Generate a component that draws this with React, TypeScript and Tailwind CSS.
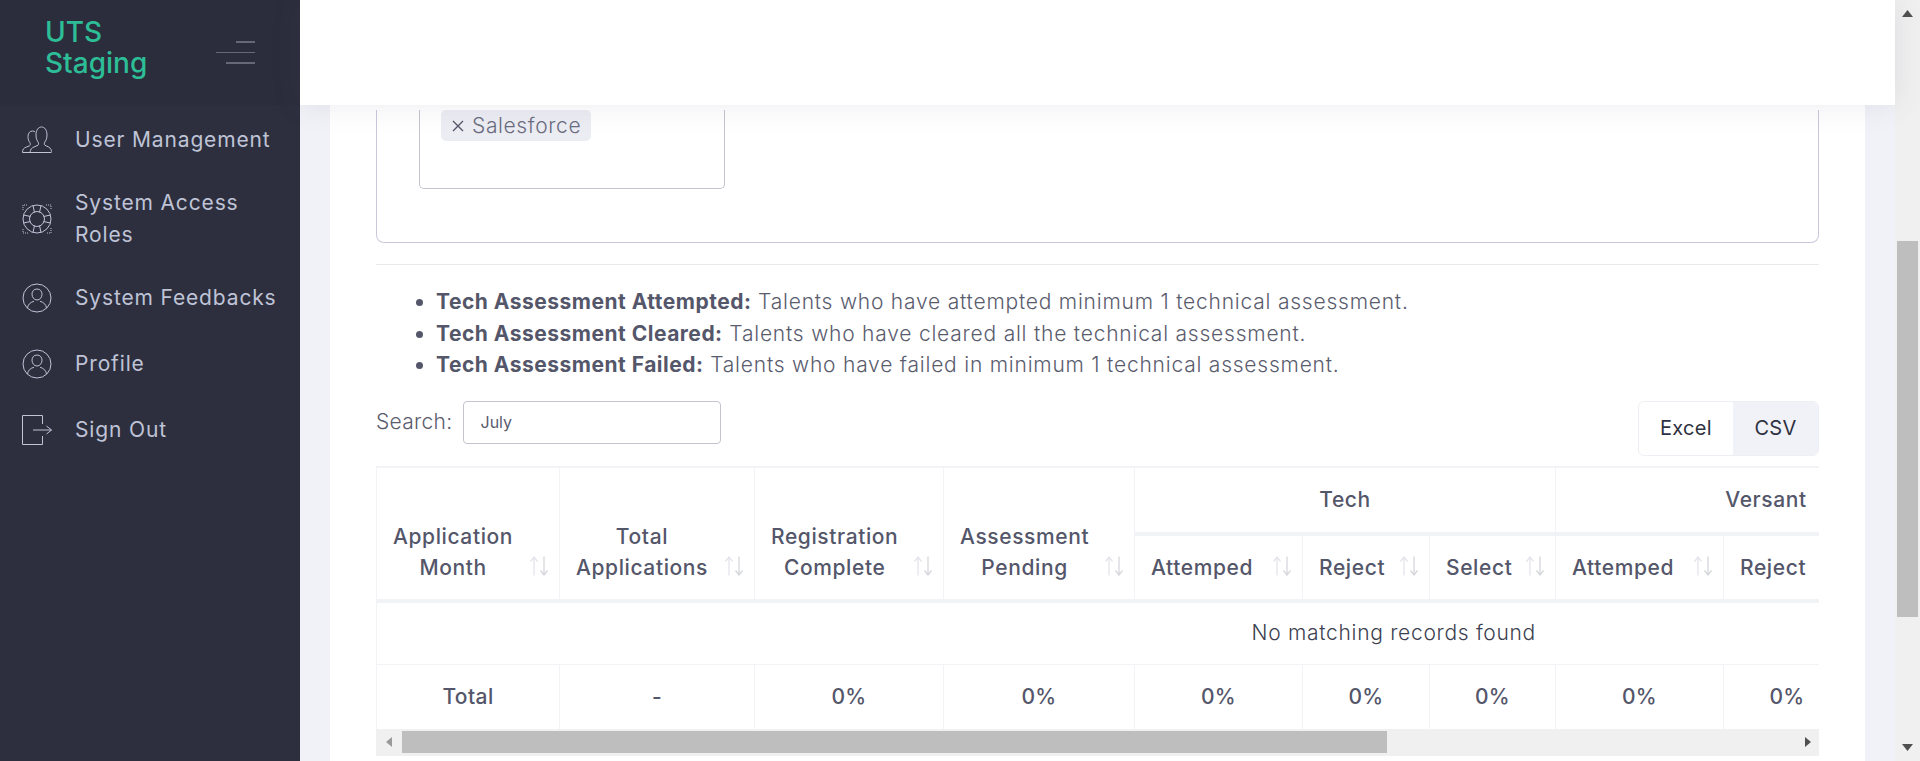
const navItems = [
  { label: "User Management", icon: <UsersIcon />, height: "h-[66px]" },
  { label: "System Access Roles", icon: <BuoyIcon />, height: "h-[92px]" },
  { label: "System Feedbacks", icon: <UserCircleIcon />, height: "h-[66px]" },
  { label: "Profile", icon: <UserCircleIcon />, height: "h-[66px]" },
  { label: "Sign Out", icon: <SignOutIcon />, height: "h-[66px]" },
];

const notes = [
  ["Tech Assessment Attempted:", "Talents who have attempted minimum 1 technical assessment."],
  ["Tech Assessment Cleared:", "Talents who have cleared all the technical assessment."],
  ["Tech Assessment Failed:", "Talents who have failed in minimum 1 technical assessment."],
];

// the last two columns sit past the clipped edge of the scroller
const columnWidths = [183, 195, 189, 191, 168, 127, 126, 168, 127, 126, 434];

function UsersIcon() {
  return (
    <svg viewBox="0 0 30 30" className="h-[30px] w-[30px] shrink-0" fill="none" stroke="currentColor" strokeWidth="1">
      <path d="M.5 27.500h29M.5 27.500c0-3 1-4.500 4-5.500l3-1.200c1-.5 1-2 .5-3-1.200-1.500-2-3.500-2-6.300 0-3.500 2-5.500 4.500-5.500 1 0 2 .4 2.500 1" />
      <path d="M8 27.500c.3-3 1.500-4.500 4-5.500l4-1.800c.8-.5.7-2 .2-3-1.300-1.500-2.200-4-2.200-7.200 0-5 2.300-8 5.500-8s5.500 3 5.500 8c0 3.200-1 5.700-2.300 7.200-.5 1-.6 2.500.2 3l2 1c2.600 1 4.600 2.500 4.600 5.500" />
    </svg>
  );
}

function BuoyIcon() {
  return (
    <svg viewBox="0 0 30 30" className="h-[30px] w-[30px] shrink-0" fill="none" stroke="currentColor" strokeWidth="1">
      <circle cx="15" cy="15" r="14" />
      <circle cx="15" cy="15" r="7.500" />
      <path d="M11 1.500l1.500 7M19 1.500l-1.500 7M11 28.500l1.500-7M19 28.500l-1.500-7M1.500 11l7 1.500M1.500 19l7-1.500M28.500 11l-7 1.500M28.500 19l-7-1.500" />
      <path d="M1 6V1h5M24 1h5v5M29 24v5h-5M6 29H1v-5" strokeDasharray="1 1" />
    </svg>
  );
}

function UserCircleIcon() {
  return (
    <svg viewBox="0 0 30 30" className="h-[30px] w-[30px] shrink-0" fill="none" stroke="currentColor" strokeWidth="1">
      <circle cx="15" cy="15" r="14" />
      <path d="M15 6c-3.300 0-5 2.500-5 5.200 0 3 2 5.800 5 5.800s5-2.800 5-5.800C20 8.500 18.300 6 15 6z" />
      <path d="M5.500 25c.5-3.500 2.500-5.500 6.500-6.800M24.500 25c-.5-3.500-2.500-5.500-6.500-6.800" />
    </svg>
  );
}

function SignOutIcon() {
  return (
    <svg viewBox="0 0 30 30" className="h-[30px] w-[30px] shrink-0" fill="none" stroke="currentColor" strokeWidth="1">
      <path d="M20.500 9V.5H.5v29h20V21" />
      <path d="M11 15h18.500M24.500 11l5 4-5 4" />
    </svg>
  );
}

function SortArrows() {
  return (
    <svg viewBox="0 0 20 20" className="mb-[7px] h-5 w-5 shrink-0" fill="none" strokeWidth="1.300">
      <path d="M5 19.500V1M1.500 5.500L5 1l3.500 4.500" stroke="#e4e5ea" />
      <path d="M15 .5V19M11.500 14.500L15 19l3.500-4.500" stroke="#d6d7dc" />
    </svg>
  );
}

function SortHeader({ lines }: { lines: string[] }) {
  return (
    <div className="flex items-end justify-between pr-[10px] pl-[16px]">
      <div className="text-center">
        {lines.map((line) => (
          <div key={line}>{line}</div>
        ))}
      </div>
      <SortArrows />
    </div>
  );
}

function Triangle({ direction, fill = "#505050" }: { direction: "left" | "right" | "up" | "down"; fill?: string }) {
  const points = {
    left: "6,0 6,10 0,5",
    right: "0,0 0,10 6,5",
    up: "0,7 11,7 5.500,0",
    down: "0,0 11,0 5.500,7",
  }[direction];
  const size = direction === "left" || direction === "right" ? "h-[10px] w-[6px]" : "h-[7px] w-[11px]";
  return (
    <svg viewBox={direction === "left" || direction === "right" ? "0 0 6 10" : "0 0 11 7"} className={size} fill={fill}>
      <polygon points={points} />
    </svg>
  );
}

const headClass =
  "border-r border-[#f2f3f7] border-b-[4px] border-b-[#f2f3f7] p-0 align-bottom text-[21px] leading-[31px] tracking-[0.6px] font-medium text-[#54566a]";
const footClass = "border-r border-[#f2f3f7] p-0 text-center text-[21px] tracking-[0.4px] font-medium text-[#54566a]";

export default function App() {
  return (
    <div className="flex h-[761px] overflow-hidden bg-[#f1f2f7] font-['Inter',sans-serif] text-[20px] leading-[32px] text-[#5a5c6e]">
      <aside className="w-[300px] shrink-0 bg-[#2d2f3f] text-[#bfc3d6]">
        <div className="flex h-[105px] items-center justify-between bg-[#2b2d3c] pr-[45px] pl-[45px]">
          <div className="mb-[10px] w-[120px] text-[28px] leading-[31px] font-medium text-[#2dbd97]">UTS Staging</div>
          <div className="flex w-[39px] flex-col items-end gap-[9px]">
            <span className="h-[2px] w-[19px] bg-[#666879]" />
            <span className="h-px w-[39px] bg-[#666879]" />
            <span className="h-[2px] w-[29px] bg-[#666879]" />
          </div>
        </div>
        <nav className="pt-[2px]">
          {navItems.map((item) => (
            <a key={item.label} className={`flex items-center gap-[23px] pr-[20px] pl-[22px] ${item.height}`}>
              {item.icon}
              <span className="text-[21px] tracking-[0.85px]">{item.label}</span>
            </a>
          ))}
        </nav>
      </aside>

      <div className="flex min-w-0 flex-1 flex-col">
        <header className="relative z-10 h-[105px] shrink-0 bg-white shadow-[0_0_28px_rgba(90,90,120,0.12)]" />
        <main className="flex-1 overflow-hidden px-[30px]">
          <section className="h-full bg-white px-[46px] pt-[5px]">
            <div className="rounded-b-[8px] border-x border-b border-[#c9c8db] px-[42px] pb-[53px]">
              <div className="flex h-[79px] w-[306px] items-start rounded-b-[5px] border-x border-b border-[#c3c4d0] pl-[21px]">
                <span className="inline-flex h-[31px] items-center gap-[8px] rounded-[5px] bg-[#ecedf3] pr-[10px] pl-[11px] text-[21px] tracking-[0.62px] text-[#6a6c80] font-light">
                  <svg viewBox="0 0 12 12" className="h-3 w-3" stroke="#54566a" strokeWidth="1.400">
                    <path d="M1 1l10 10M11 1L1 11" />
                  </svg>
                  Salesforce
                </span>
              </div>
            </div>

            <hr className="mt-[21px] border-[#e8e8ec]" />

            <ul className="mt-[21px] list-disc pl-[60px] text-[21px] leading-[31.500px] tracking-[0.78px] font-light marker:text-[#54566a]">
              {notes.map(([title, text]) => (
                <li key={title}>
                  <b className="font-bold tracking-[0.5px] text-[#54566a]">{title}</b> {text}
                </li>
              ))}
            </ul>

            <div className="mt-[20px] flex items-start justify-between">
              <label className="flex items-center gap-[10px] text-[21px] tracking-[0.3px] font-light">
                Search:
                <input
                  readOnly
                  value="July"
                  className="h-[43px] w-[258px] rounded-[4px] border border-[#c3c4d0] px-[17px] text-[16px] font-normal tracking-normal text-[#5a5c6e]"
                />
              </label>
              <div className="flex h-[55px] w-[181px] overflow-hidden rounded-[6px] border border-[#eeeff4] tracking-[0.3px] text-[#2f3142]">
                <button className="w-[94px]">Excel</button>
                <button className="flex-1 bg-[#f1f2f7]">CSV</button>
              </div>
            </div>

            <div className="mt-[10px] overflow-hidden">
              <table className="w-[2034px] table-fixed border-collapse border-t-2 border-l border-[#f2f3f7]">
                <colgroup>
                  {columnWidths.map((width, index) => (
                    <col key={index} style={{ width }} />
                  ))}
                </colgroup>
                <thead>
                  <tr className="h-[67px]">
                    <th rowSpan={2} className={headClass + " pb-[16px]"}><SortHeader lines={["Application", "Month"]} /></th>
                    <th rowSpan={2} className={headClass + " pb-[16px]"}><SortHeader lines={["Total", "Applications"]} /></th>
                    <th rowSpan={2} className={headClass + " pb-[16px]"}><SortHeader lines={["Registration", "Complete"]} /></th>
                    <th rowSpan={2} className={headClass + " pb-[16px]"}><SortHeader lines={["Assessment", "Pending"]} /></th>
                    <th colSpan={3} className={headClass + " align-middle"}>Tech</th>
                    <th colSpan={3} className={headClass + " align-middle"}>Versant</th>
                    <th className={headClass} />
                  </tr>
                  <tr className="h-[67px]">
                    {["Attemped", "Reject", "Select", "Attemped", "Reject"].map((label, index) => (
                      <th key={index} className={headClass + " pb-[16px]"}><SortHeader lines={[label]} /></th>
                    ))}
                    <th className={headClass} />
                    <th className={headClass} />
                  </tr>
                </thead>
                <tbody>
                  <tr className="h-[64px] border-b border-[#f2f3f7]">
                    <td colSpan={11} className="text-center text-[21px] tracking-[0.7px] font-light text-[#3d3f50]">No matching records found</td>
                  </tr>
                </tbody>
                <tfoot>
                  <tr className="h-[64px]">
                    <td className={footClass}>Total</td>
                    <td className={footClass}>-</td>
                    {Array.from({ length: 7 }).map((_, index) => (
                      <td key={index} className={footClass}>0%</td>
                    ))}
                    <td className={footClass} />
                    <td className={footClass} />
                  </tr>
                </tfoot>
              </table>
            </div>

            <div className="flex h-[27px] items-center bg-[#f0f0f0]">
              <div className="flex w-[26px] justify-center"><Triangle direction="left" fill="#9a9a9a" /></div>
              <div className="h-[22px] w-[985px] bg-[#bebebe]" />
              <div className="flex flex-1 justify-end pr-[8px]"><Triangle direction="right" /></div>
            </div>
          </section>
        </main>
      </div>

      <div className="flex w-[25px] shrink-0 flex-col items-center bg-[#f0f0f0]">
        <div className="flex h-[241px] w-full flex-col items-center pt-[10px]"><Triangle direction="up" /></div>
        <div className="h-[376px] w-[21px] bg-[#bebebe]" />
        <div className="mt-auto pb-[10px]"><Triangle direction="down" /></div>
      </div>
    </div>
  );
}
